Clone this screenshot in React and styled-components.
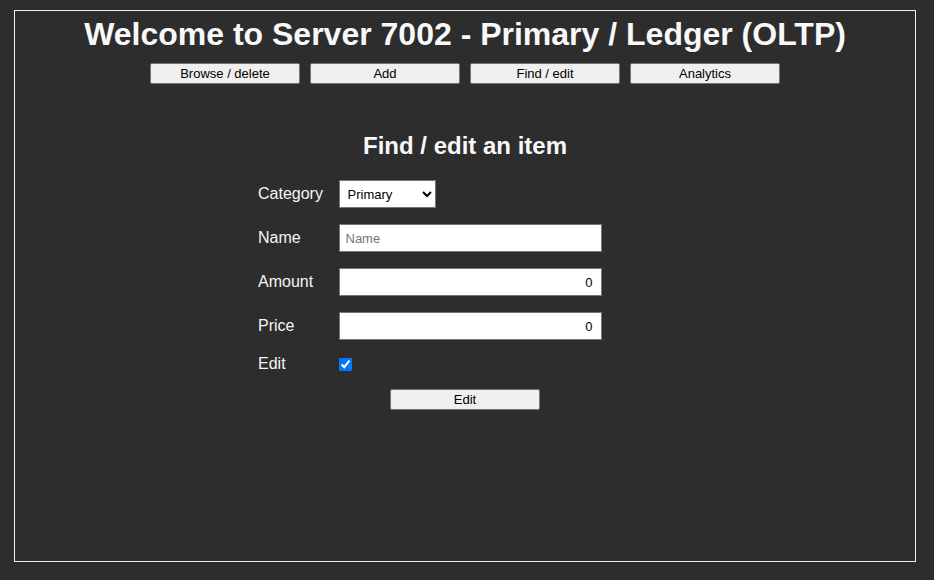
import React from "react";
import styled, { createGlobalStyle } from "styled-components";

const Global = createGlobalStyle`
  html, body { margin: 0; padding: 0; background: #2d2d2d; }
  body { font-family: "Liberation Sans", Arial, sans-serif; color: #f5f5f5; }
`;

const Page = styled.div`
  padding: 10px 0 0 14px;
  height: 580px;
  box-sizing: border-box;
`;

const Panel = styled.main`
  box-sizing: border-box;
  width: 902px;
  height: 552px;
  border: 1px solid #f0f0f0;
  display: flex;
  flex-direction: column;
  align-items: center;
`;

const Title = styled.h1`
  margin: 5px 0 0;
  font-size: 32px;
  font-weight: bold;
  line-height: 37px;
  color: #f8f8f8;
`;

const Nav = styled.nav`
  margin-top: 10px;
  display: flex;
  gap: 10px;
`;

const Button = styled.button`
  box-sizing: border-box;
  width: 150px;
  height: 21px;
  padding: 0;
  font-family: "Liberation Sans", Arial, sans-serif;
  font-size: 13px;
  color: #000;
  background: #efefef;
  border: 1px solid #767676;
  border-radius: 2px;
`;

const Heading = styled.h2`
  margin: 48px 0 0;
  font-size: 24px;
  line-height: 28px;
  font-weight: bold;
  color: #f8f8f8;
`;

const Form = styled.form`
  margin-top: 20px;
  width: 414px;
  display: flex;
  flex-direction: column;
  align-items: flex-start;
`;

const Row = styled.div`
  display: grid;
  grid-template-columns: 80.5px auto;
  align-items: center;
  height: ${(p) => p.$h || 28}px;
  margin-bottom: ${(p) => p.$mb ?? 16}px;
`;

const Label = styled.label`
  font-size: 16px;
  color: #f5f5f5;
`;

const Select = styled.select`
  box-sizing: border-box;
  width: 97px;
  height: 28px;
  font-family: "Liberation Sans", Arial, sans-serif;
  font-size: 13px;
  padding: 0 4px;
  color: #000;
  background: #fff;
  border: 1px solid #767676;
  border-radius: 0;
`;

const Input = styled.input`
  box-sizing: border-box;
  width: 263px;
  height: 28px;
  padding: 0 8px 0 6px;
  font-family: "Liberation Sans", Arial, sans-serif;
  font-size: 13px;
  color: #000;
  background: #fff;
  border: 1px solid #767676;
  border-radius: 0;
  text-align: ${(p) => (p.$right ? "right" : "left")};
  &::placeholder { color: #757575; }
`;

const Check = styled.input`
  margin: 0;
  width: 13px;
  height: 13px;
`;

const SubmitWrap = styled.div`
  width: 414px;
  display: flex;
  justify-content: center;
  margin-top: 18px;
`;

export default function App() {
  return (
    <>
      <Global />
      <Page>
        <Panel>
          <Title>Welcome to Server 7002 - Primary / Ledger (OLTP)</Title>
          <Nav>
            <Button>Browse / delete</Button>
            <Button>Add</Button>
            <Button>Find / edit</Button>
            <Button>Analytics</Button>
          </Nav>
          <Heading>Find / edit an item</Heading>
          <Form onSubmit={(e) => e.preventDefault()}>
            <Row>
              <Label>Category</Label>
              <Select defaultValue="Primary">
                <option>Primary</option>
                <option>Secondary</option>
              </Select>
            </Row>
            <Row>
              <Label>Name</Label>
              <Input placeholder="Name" />
            </Row>
            <Row>
              <Label>Amount</Label>
              <Input $right defaultValue="0" />
            </Row>
            <Row $mb={15}>
              <Label>Price</Label>
              <Input $right defaultValue="0" />
            </Row>
            <Row $h={16} $mb={0}>
              <Label>Edit</Label>
              <Check type="checkbox" defaultChecked />
            </Row>
            <SubmitWrap>
              <Button type="button">Edit</Button>
            </SubmitWrap>
          </Form>
        </Panel>
      </Page>
    </>
  );
}
